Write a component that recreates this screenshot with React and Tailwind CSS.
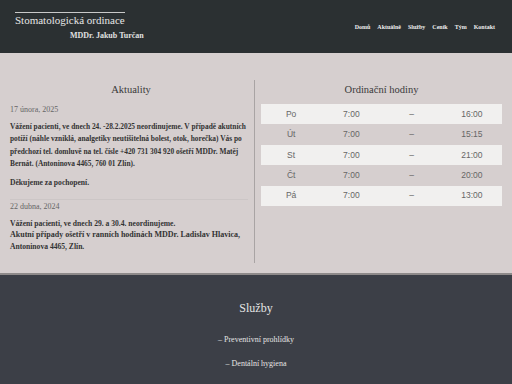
export default function App() {
  const hours = [
    ["Po", "7:00", "–", "16:00"],
    ["Út", "7:00", "–", "15:15"],
    ["St", "7:00", "–", "21:00"],
    ["Čt", "7:00", "–", "20:00"],
    ["Pá", "7:00", "–", "13:00"],
  ];
  const nav = ["Domů", "Aktuálně", "Služby", "Ceník", "Tým", "Kontakt"];
  return (
    <div className="w-[512px] h-[384px] overflow-hidden bg-[#d6cfcf] font-[family-name:'Liberation_Serif',serif]">
      <header className="h-[53px] bg-[#2b3032] flex justify-between pl-[15px] pr-[17px]">
        <div className="pt-[12px]">
          <div className="border-t border-[#c9c9c9] pt-[1px] w-[110px] text-[11px] leading-[13px] text-[#e6e6e6] whitespace-nowrap">
            Stomatologická ordinace
          </div>
          <div className="pl-[55px] pt-[4px] text-[8px] leading-[10px] font-bold text-[#e0e0e0] whitespace-nowrap">
            MDDr. Jakub Turčan
          </div>
        </div>
        <nav className="flex gap-[7px] pt-[22px] text-[6px] leading-[10px] font-bold text-[#eeeeee]">
          {nav.map((n) => (
            <span key={n}>{n}</span>
          ))}
        </nav>
      </header>
      <main className="h-[222px] border-b-2 border-[#8e8a8a] flex pt-[27px] pb-[10px]">
        <section className="w-[255px] border-r border-[#a9a4a4] pt-[3px] pl-[10px] pr-[6px] text-[#333]">
          <h2 className="text-center text-[10.5px] leading-[14px] text-[#3a3a3a] pl-[4px]">Aktuality</h2>
          <div className="mt-[7px] text-[8px] leading-[12px] text-[#666]">17 února, 2025</div>
          <div className="mt-[5px] text-[7.4px] leading-[12.4px] font-bold text-[#333] whitespace-nowrap">
            Vážení pacienti, ve dnech 24. -28.2.2025 neordinujeme. V případě akutních
            <br />
            potíží (náhle vzniklá, analgetiky neutišitelná bolest, otok, horečka) Vás po
            <br />
            předchozí tel. domluvě na tel. čísle +420 731 304 920 ošetří MDDr. Matěj
            <br />
            Bernát. (Antoninova 4465, 760 01 Zlín).
          </div>
          <div className="mt-[6px] text-[7.6px] leading-[12px] font-bold text-[#333]">Děkujeme za pochopení.</div>
          <div className="mt-[10px] border-t border-[#ccc6c6]" />
          <div className="mt-[1px] text-[8px] leading-[12px] text-[#666]">22 dubna, 2024</div>
          <div className="mt-[5px] text-[7.6px] leading-[11.8px] font-bold text-[#333] whitespace-nowrap">
            Vážení pacienti, ve dnech 29. a 30.4. neordinujeme.
            <br />
            <span className="text-[8px]">Akutní případy ošetří v ranních hodinách MDDr. Ladislav Hlavica,</span>
            <br />
            Antoninova 4465, Zlín.
          </div>
        </section>
        <section className="flex-1 pt-[3px] pl-[6px] pr-[10px]">
          <h2 className="text-center text-[10.5px] leading-[14px] text-[#3a3a3a]">Ordinační hodiny</h2>
          <div className="mt-[7px] font-[family-name:'Liberation_Sans',sans-serif] text-[8.5px] text-[#666]">
            {hours.map((r, i) => (
              <div
                key={r[0]}
                className={
                  "grid grid-cols-4 h-[20.4px] items-center text-center " +
                  (i % 2 === 0 ? "bg-[#f1f0ef]" : "")
                }
              >
                {r.map((c, j) => (
                  <span key={j}>{c}</span>
                ))}
              </div>
            ))}
          </div>
        </section>
      </main>
      <footer className="h-[200px] bg-[#3c3f47] flex flex-col items-center pt-[25px] text-[#e4e4e4]">
        <h2 className="text-[12px] leading-[16px]">Služby</h2>
        <p className="mt-[19px] text-[8px] leading-[10px]">– Preventivní prohlídky</p>
        <p className="mt-[14px] text-[8px] leading-[10px]">– Dentální hygiena</p>
      </footer>
    </div>
  );
}
